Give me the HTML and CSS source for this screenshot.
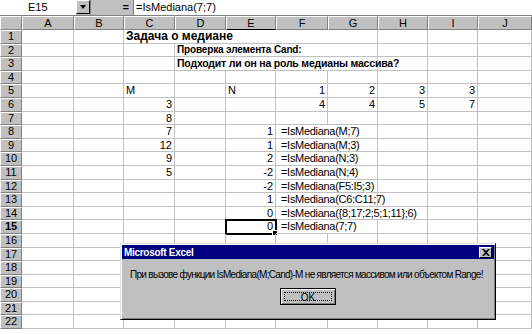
FILE: index.html
```html
<!DOCTYPE html>
<html lang="ru">
<head>
    <meta charset="UTF-8">
    <title>Microsoft Excel - IsMediana</title>
    <link rel="stylesheet" href="styles.css">
</head>
<body>
  <div id="formulaBar">
    <div class="nameBox">E15</div>
    <div class="dropBtn"><span class="arrow"></span></div>
    <div class="eqArea">=</div>
    <div class="formulaField">=IsMediana(7;7)</div>
  </div>

  <div id="sheet">
    <div class="row head">
      <div class="corner"></div>
      <div class="ch">A</div><div class="ch">B</div><div class="ch">C</div><div class="ch">D</div>
      <div class="ch sel">E</div><div class="ch">F</div><div class="ch">G</div><div class="ch">H</div>
      <div class="ch">I</div><div class="ch">J</div>
    </div>
    <div class="row">
      <div class="rh">1</div><div class="c"></div><div class="c"></div>
      <div class="c span5 title big">Задача о медиане</div>
      <div class="c"></div><div class="c"></div><div class="c"></div>
    </div>
    <div class="row">
      <div class="rh">2</div><div class="c"></div><div class="c"></div><div class="c"></div>
      <div class="c span4 sub">Проверка элемента Cand:</div>
      <div class="c"></div><div class="c"></div><div class="c"></div>
    </div>
    <div class="row">
      <div class="rh">3</div><div class="c"></div><div class="c"></div><div class="c"></div>
      <div class="c span4 title">Подходит ли он на роль медианы массива?</div>
      <div class="c"></div><div class="c"></div><div class="c"></div>
    </div>
    <div class="row">
      <div class="rh">4</div><div class="c"></div><div class="c"></div><div class="c"></div><div class="c"></div>
      <div class="c"></div><div class="c"></div><div class="c"></div><div class="c"></div><div class="c"></div><div class="c"></div>
    </div>
    <div class="row">
      <div class="rh">5</div><div class="c"></div><div class="c"></div><div class="c">M</div><div class="c"></div>
      <div class="c">N</div><div class="c num">1</div><div class="c num">2</div><div class="c num">3</div><div class="c num">3</div><div class="c"></div>
    </div>
    <div class="row">
      <div class="rh">6</div><div class="c"></div><div class="c"></div><div class="c num">3</div><div class="c"></div>
      <div class="c"></div><div class="c num">4</div><div class="c num">4</div><div class="c num">5</div><div class="c num">7</div><div class="c"></div>
    </div>
    <div class="row">
      <div class="rh">7</div><div class="c"></div><div class="c"></div><div class="c num">8</div><div class="c"></div>
      <div class="c"></div><div class="c"></div><div class="c"></div><div class="c"></div><div class="c"></div><div class="c"></div>
    </div>
    <div class="row">
      <div class="rh">8</div><div class="c"></div><div class="c"></div><div class="c num">7</div><div class="c"></div>
      <div class="c num">1</div><div class="c span2 fx">=IsMediana(M;7)</div><div class="c"></div><div class="c"></div><div class="c"></div>
    </div>
    <div class="row">
      <div class="rh">9</div><div class="c"></div><div class="c"></div><div class="c num">12</div><div class="c"></div>
      <div class="c num">1</div><div class="c span2 fx">=IsMediana(M;3)</div><div class="c"></div><div class="c"></div><div class="c"></div>
    </div>
    <div class="row">
      <div class="rh">10</div><div class="c"></div><div class="c"></div><div class="c num">9</div><div class="c"></div>
      <div class="c num">2</div><div class="c span2 fx">=IsMediana(N;3)</div><div class="c"></div><div class="c"></div><div class="c"></div>
    </div>
    <div class="row">
      <div class="rh">11</div><div class="c"></div><div class="c"></div><div class="c num">5</div><div class="c"></div>
      <div class="c num">-2</div><div class="c span2 fx">=IsMediana(N;4)</div><div class="c"></div><div class="c"></div><div class="c"></div>
    </div>
    <div class="row">
      <div class="rh">12</div><div class="c"></div><div class="c"></div><div class="c"></div><div class="c"></div>
      <div class="c num">-2</div><div class="c span2 fx">=IsMediana(F5:I5;3)</div><div class="c"></div><div class="c"></div><div class="c"></div>
    </div>
    <div class="row">
      <div class="rh">13</div><div class="c"></div><div class="c"></div><div class="c"></div><div class="c"></div>
      <div class="c num">1</div><div class="c span2 fx">=IsMediana(C6:C11;7)</div><div class="c"></div><div class="c"></div><div class="c"></div>
    </div>
    <div class="row">
      <div class="rh">14</div><div class="c"></div><div class="c"></div><div class="c"></div><div class="c"></div>
      <div class="c num">0</div><div class="c span3 fx">=IsMediana({8;17;2;5;1;11};6)</div><div class="c"></div><div class="c"></div>
    </div>
    <div class="row">
      <div class="rh active">15</div><div class="c"></div><div class="c"></div><div class="c"></div><div class="c"></div>
      <div class="c num current">0<span class="handle"></span></div><div class="c span2 fx">=IsMediana(7;7)</div><div class="c"></div><div class="c"></div><div class="c"></div>
    </div>
    <div class="row">
      <div class="rh">16</div><div class="c"></div><div class="c"></div><div class="c"></div><div class="c"></div>
      <div class="c"></div><div class="c"></div><div class="c"></div><div class="c"></div><div class="c"></div><div class="c"></div>
    </div>
    <div class="row">
      <div class="rh">17</div><div class="c"></div><div class="c"></div><div class="c"></div><div class="c"></div>
      <div class="c"></div><div class="c"></div><div class="c"></div><div class="c"></div><div class="c"></div><div class="c"></div>
    </div>
    <div class="row">
      <div class="rh">18</div><div class="c"></div><div class="c"></div><div class="c"></div><div class="c"></div>
      <div class="c"></div><div class="c"></div><div class="c"></div><div class="c"></div><div class="c"></div><div class="c"></div>
    </div>
    <div class="row">
      <div class="rh">19</div><div class="c"></div><div class="c"></div><div class="c"></div><div class="c"></div>
      <div class="c"></div><div class="c"></div><div class="c"></div><div class="c"></div><div class="c"></div><div class="c"></div>
    </div>
    <div class="row">
      <div class="rh">20</div><div class="c"></div><div class="c"></div><div class="c"></div><div class="c"></div>
      <div class="c"></div><div class="c"></div><div class="c"></div><div class="c"></div><div class="c"></div><div class="c"></div>
    </div>
    <div class="row">
      <div class="rh">21</div><div class="c"></div><div class="c"></div><div class="c"></div><div class="c"></div>
      <div class="c"></div><div class="c"></div><div class="c"></div><div class="c"></div><div class="c"></div><div class="c"></div>
    </div>
    <div class="row">
      <div class="rh">22</div><div class="c"></div><div class="c"></div><div class="c"></div><div class="c"></div>
      <div class="c"></div><div class="c"></div><div class="c"></div><div class="c"></div><div class="c"></div><div class="c"></div>
    </div>
  </div>

  <div id="msgBox">
    <div class="titleBar">
      <span>Microsoft Excel</span>
      <div class="closeBtn">
        <svg width="8" height="7" viewBox="0 0 8 7"><path d="M0 0h2l2 2 2-2h2L5 3.5 8 7H6L4 5 2 7H0l3-3.5z" fill="#000"/></svg>
      </div>
    </div>
    <div class="msgText">При вызове функции IsMediana(M;Cand)-M не является массивом или объектом Range!</div>
    <div class="btnRow">
      <div class="okBtn"><span>OK</span></div>
    </div>
  </div>
</body>
</html>
```

FILE: styles.css
```css
body
{
    margin: 0;
    width: 532px;
    height: 334px;
    overflow: hidden;
    background: #fff;
    font-family: "Liberation Sans", Arial, sans-serif;
    font-size: 11px;
    color: #000;
    position: relative;
}

/* formula bar */
#formulaBar
{
    display: flex;
    height: 15px;
    background: #c0c0c0;
    border-bottom: 1px solid #808080;
}
.nameBox
{
    width: 76px;
    background: #fff;
    padding-left: 28px;
    box-sizing: border-box;
    line-height: 15px;
}
.dropBtn
{
    width: 14px;
    height: 14px;
    box-sizing: border-box;
    background: #c0c0c0;
    border: 1px solid;
    border-color: #fff #000 #000 #fff;
    display: flex;
    align-items: center;
    justify-content: center;
}
.arrow
{
    width: 0;
    height: 0;
    border-left: 3px solid transparent;
    border-right: 3px solid transparent;
    border-top: 4px solid #000;
}
.eqArea
{
    width: 43px;
    border-left: 1px solid #808080;
    box-sizing: border-box;
    text-align: right;
    padding-right: 4px;
    font-weight: bold;
    line-height: 15px;
}
.formulaField
{
    flex: 1;
    background: #fff;
    border-left: 1px solid #808080;
    padding-left: 2px;
    line-height: 15px;
}

/* sheet */
.row
{
    display: grid;
    grid-template-columns: 22px 52px 50px 51px 51px 50px 52px 50px 50px 50px 54px;
    height: 13.6px;
}
.row.head
{
    height: 14px;
}
.corner, .ch, .rh
{
    background: #c0c0c0;
    box-sizing: border-box;
    border-right: 1px solid #808080;
    border-bottom: 1px solid #808080;
    border-left: 1px solid #fff;
    border-top: 1px solid #fff;
    text-align: center;
    line-height: 12px;
}
.ch.sel
{
    border-bottom: 1px solid #000;
}
.rh
{
    line-height: 11px;
}
.rh.active
{
    font-weight: bold;
}
.c
{
    box-sizing: border-box;
    border-right: 1px solid #c0c0c0;
    border-bottom: 1px solid #c0c0c0;
    padding: 0 2px;
    line-height: 12px;
    white-space: nowrap;
    overflow: visible;
    position: relative;
}
.num
{
    text-align: right;
}
.span2 { grid-column: span 2; }
.span3 { grid-column: span 3; }
.span4 { grid-column: span 4; }
.span5 { grid-column: span 5; }
.title
{
    font-weight: bold;
    font-size: 10.5px;
    letter-spacing: -0.2px;
}
.title.big
{
    font-size: 12px;
    letter-spacing: 0;
}
.sub
{
    font-weight: bold;
    font-size: 10px;
    letter-spacing: -0.15px;
}
.fx
{
    padding-left: 5px;
    letter-spacing: -0.3px;
}
.current
{
    outline: 2px solid #000;
    outline-offset: -1px;
}
.handle
{
    position: absolute;
    right: -3px;
    bottom: -3px;
    width: 4px;
    height: 4px;
    background: #000;
    border: 1px solid #fff;
}

/* message box */
#msgBox
{
    position: absolute;
    left: 120px;
    top: 243px;
    width: 376px;
    height: 77px;
    box-sizing: border-box;
    background: #c0c0c0;
    border: 1px solid;
    border-color: #dfdfdf #000 #000 #dfdfdf;
    box-shadow: inset 1px 1px 0 #fff, inset -1px -1px 0 #808080;
    padding: 1px;
}
.titleBar
{
    height: 14px;
    background: #000080;
    color: #fff;
    font-weight: bold;
    font-size: 10px;
    letter-spacing: -0.3px;
    display: flex;
    align-items: center;
    justify-content: space-between;
    padding: 0 2px;
}
.closeBtn
{
    width: 13px;
    height: 11px;
    box-sizing: border-box;
    background: #c0c0c0;
    border: 1px solid;
    border-color: #fff #000 #000 #fff;
    display: flex;
    align-items: center;
    justify-content: center;
}
.msgText
{
    padding: 10px 0 0 8px;
    font-size: 10px;
    letter-spacing: -0.7px;
    white-space: nowrap;
}
.btnRow
{
    display: flex;
    justify-content: center;
    padding-top: 8px;
}
.okBtn
{
    width: 56px;
    height: 17px;
    box-sizing: border-box;
    border: 1px solid #000;
    background: #c0c0c0;
    box-shadow: inset 1px 1px 0 #fff, inset -1px -1px 0 #808080;
    display: flex;
    padding: 3px;
}
.okBtn span
{
    flex: 1;
    border: 1px dotted #000;
    text-align: center;
    font-size: 10px;
    line-height: 9px;
}
```
